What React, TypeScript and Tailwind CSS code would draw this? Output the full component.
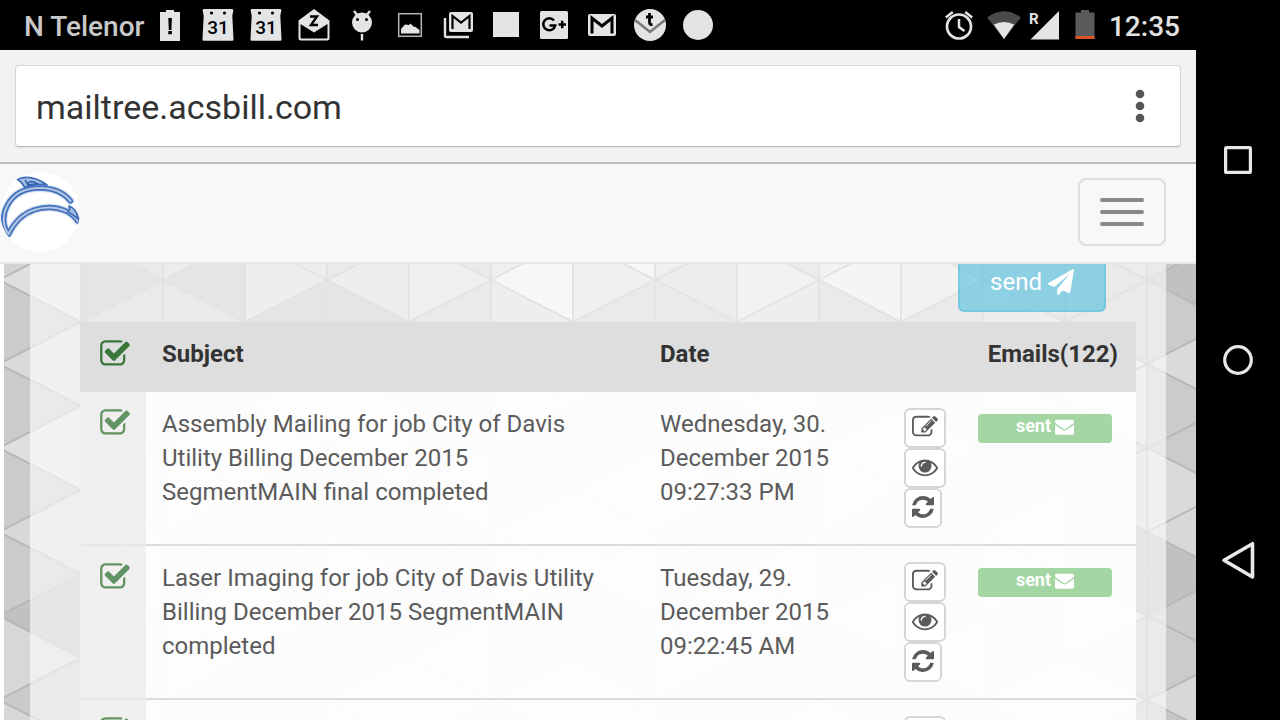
import React from "react";

type IconProps = { d: string; className: string; viewBox?: string };

function Glyph({ d, className, viewBox = "0 0 1792 1792" }: IconProps) {
  return (
    <svg viewBox={viewBox} className={className} fill="currentColor" aria-hidden="true">
      <path d={d} />
    </svg>
  );
}

const CHECK =
  "M1472 930v318q0 119-84.5 203.5t-203.5 84.5h-832q-119 0-203.5-84.5t-84.5-203.5v-832q0-119 84.5-203.5t203.5-84.5h832q63 0 117 25 15 7 18 23 3 17-9 29l-49 49q-10 10-23 10-3 0-9-2-23-6-45-6h-832q-66 0-113 47t-47 113v832q0 66 47 113t113 47h832q66 0 113-47t47-113v-254q0-13 9-22l64-64q10-10 23-10 6 0 12 3 20 8 20 29zm231-489l-814 814q-24 24-57 24t-57-24l-430-430q-24-24-24-57t24-57l110-110q24-24 57-24t57 24l263 263 647-647q24-24 57-24t57 24l110 110q24 24 24 57t-24 57z";
const EDIT =
  "M888 1184l116-116-152-152-116 116v56h96v96h56zm440-720q-16-16-33 1l-350 350q-17 17-1 33t33-1l350-350q17-17 1-33zm80 594v190q0 119-84.5 203.5t-203.5 84.5h-832q-119 0-203.5-84.5t-84.5-203.5v-832q0-119 84.5-203.5t203.5-84.5h832q63 0 117 25 15 7 18 23 3 17-9 29l-49 49q-14 14-32 8-23-6-45-6h-832q-66 0-113 47t-47 113v832q0 66 47 113t113 47h832q66 0 113-47t47-113v-126q0-13 9-22l64-64q15-15 35-7t20 29zm-96-738l288 288-672 672h-288v-288zm444 132l-92 92-288-288 92-92q28-28 68-28t68 28l152 152q28 28 28 68t-28 68z";
const EYE =
  "M1664 960q-152-236-381-353 61 104 61 225 0 185-131.5 316.5t-316.5 131.5-316.5-131.5-131.5-316.5q0-121 61-225-229 117-381 353 133 205 333.5 326.5t434.5 121.5 434.5-121.5 333.5-326.5zm-720-384q0-20-14-34t-34-14q-125 0-214.5 89.5t-89.5 214.5q0 20 14 34t34 14 34-14 14-34q0-86 61-147t147-61q20 0 34-14t14-34zm848 384q0 34-20 69-140 230-376.5 368.5t-499.5 138.5-499.5-139-376.5-368q-20-35-20-69t20-69q140-229 376.5-368t499.5-139 499.5 139 376.5 368q20 35 20 69z";
const REFRESH =
  "M1639 1056q0 5-1 7-64 268-268 434.5t-478 166.5q-146 0-282.5-55t-243.5-157l-129 129q-19 19-45 19t-45-19-19-45v-448q0-26 19-45t45-19h448q26 0 45 19t19 45-19 45l-137 137q71 66 161 102t187 36q134 0 250-65t186-179q11-17 53-117 8-23 30-23h192q13 0 22.5 9.5t9.5 22.5zm25-800v448q0 26-19 45t-45 19h-448q-26 0-45-19t-19-45 19-45l138-138q-148-137-349-137-134 0-250 65t-186 179q-11 17-53 117-8 23-30 23h-199q-13 0-22.5-9.5t-9.5-22.5v-7q65-268 270-434.5t480-166.5q146 0 284 55.5t245 156.5l130-129q19-19 45-19t45 19 19 45z";
const PLANE =
  "M1764 11q33 24 27 64l-256 1536q-5 29-32 45-14 8-31 8-11 0-24-5l-453-185-242 295q-18 23-49 23-13 0-22-4-19-7-30.5-23.5t-11.5-36.5v-349l864-1059-1069 925-395-162q-37-14-40-55-2-40 32-59l1664-960q15-9 32-9 20 0 36 11z";
const ENVELOPE =
  "M1792 710v794q0 66-47 113t-113 47h-1472q-66 0-113-47t-47-113v-794q44 49 101 87 362 246 497 345 57 42 92.5 65.5t94.5 48 110 24.5h2q51 0 110-24.5t94.5-48 92.5-65.5q170-123 498-345 57-39 100-87zm0-294q0 79-49 151t-122 123q-376 261-468 325-10 7-42.5 31t-54 38.5-52 32.5-57.5 27-50 9h-2q-23 0-50-9t-57.5-27-52-32.5-54-38.5-42.5-31q-91-64-262-182.5t-205-142.5q-62-42-117-115.5t-55-136.5q0-78 41.5-130t118.5-52h1472q65 0 112.5 47t47.5 113z";

// Notification icons share a 48 x 50 cell.
function Cell({ children }: { children: React.ReactNode }) {
  return (
    <svg viewBox="0 0 48 50" className="h-[50px] w-12 shrink-0" fill="#e4e4e4" aria-hidden="true">
      {children}
    </svg>
  );
}

function Calendar() {
  return (
    <Cell>
      <path d="M10 9h28c1 0 1.500 .8 1.300 1.800l-1 5 1.200 23.500c0 1-.5 1.500-1.500 1.500H10c-1 0-1.500-.5-1.500-1.500l1.200-23.500-1-5C8.500 9.800 9 9 10 9z" />
      <circle cx="17.500" cy="13" r="1.600" fill="#000" />
      <circle cx="30.500" cy="13" r="1.600" fill="#000" />
      <text
        x="24"
        y="34.300"
        textAnchor="middle"
        fontSize="19"
        fontWeight="500"
        fill="#000"
        className="font-['Liberation_Sans_Narrow','Roboto',sans-serif]"
      >
        31
      </text>
    </Cell>
  );
}

function StatusBar() {
  return (
    <header className="flex h-[50px] shrink-0 items-center bg-black pr-4">
      <span className="w-[146px] shrink-0 pl-6 pt-1 text-[28px] leading-8 font-medium whitespace-nowrap text-[#c9c9c9]">
        N Telenor
      </span>
      <Cell>
        <path d="M14 12h6v-2h8v2h6v29H14z" />
        <path d="M22.300 18h3.600l-.5 12h-2.600zM22.300 31h3.600v3.200h-3.600z" fill="#000" />
      </Cell>
      <Calendar />
      <Calendar />
      <Cell>
        <path d="M24 9 8.500 20.500V38q0 2.500 2.500 2.500h26q2.500 0 2.500-2.500V20.500z" />
        <path d="M10.500 24 24 32.500 37.500 24v13.500q0 1-1 1h-25q-1 0-1-1z" fill="#000" />
        <path d="M20 16.500h7L21 25h7" fill="none" stroke="#000" strokeWidth="2.400" />
      </Cell>
      <Cell>
        <circle cx="24" cy="22.500" r="10" />
        <path d="M16 11l4 5M32 11l-4 5M24 34v6.500" stroke="#e4e4e4" strokeWidth="2.400" />
        <circle cx="19.500" cy="19.500" r="1.500" fill="#000" />
        <circle cx="28.500" cy="19.500" r="1.500" fill="#000" />
      </Cell>
      <Cell>
        <rect x="12.700" y="13.700" width="22.600" height="22.600" fill="none" stroke="#b5b5b5" strokeWidth="1.500" />
        <path d="M15 33.500V29l4-4.500 4 .5 1.500-1.500 3 3 2 .5 4 3v3.500z" />
      </Cell>
      <Cell>
        <path d="M11 18v17.500q0 1.500 1.500 1.500H35" fill="none" stroke="#e4e4e4" strokeWidth="2.400" />
        <rect x="15" y="12" width="24" height="20" rx="2" />
        <path d="M18.500 29V16l8.500 6.500 8.500-6.500v13" fill="none" stroke="#000" strokeWidth="2.200" />
      </Cell>
      <Cell>
        <rect x="11" y="12" width="26" height="25" />
      </Cell>
      <Cell>
        <rect x="10" y="11" width="28" height="28" rx="1.500" />
        <path d="M24 20.500a6 6 0 1 0 1.200 5h-5.700M28.500 24.500h7.500M32.200 20.700v7.600" fill="none" stroke="#000" strokeWidth="2.500" />
      </Cell>
      <Cell>
        <rect x="10" y="14" width="28" height="22" rx="2" />
        <path d="M14 33.500V18l10 8 10-8v15.500" fill="none" stroke="#000" strokeWidth="3" />
      </Cell>
      <Cell>
        <circle cx="24" cy="25" r="16" />
        <path d="M9 20l15 12 15-12" fill="none" stroke="#777" strokeWidth="2.500" />
        <path d="M23.500 13v9.500q0 2.500 3 2M20 17h7" fill="none" stroke="#000" strokeWidth="2.800" />
      </Cell>
      <Cell>
        <circle cx="24" cy="25" r="15" />
      </Cell>
      <div className="ml-auto flex items-center">
        <svg viewBox="0 0 32 50" className="h-[50px] w-8" fill="none" stroke="#e4e4e4" aria-hidden="true">
          <circle cx="16" cy="26.500" r="12" strokeWidth="2.700" />
          <path d="M16 19v8l5.500 4M2.800 17.500l7-5.500M29.200 17.500l-7-5.500" strokeWidth="2.500" />
        </svg>
        <svg viewBox="0 0 36 50" className="ml-[11px] h-[50px] w-9" aria-hidden="true">
          <path d="M18 39 1 17.500Q18 5 35 17.500z" fill="#494949" />
          <path d="M18 39 7.800 24.500Q18 19.500 28.200 24.500z" fill="#e4e4e4" />
        </svg>
        <svg viewBox="0 0 32 50" className="ml-[7px] h-[50px] w-8" fill="#e4e4e4" aria-hidden="true">
          <path d="M30 11v28.500H1.500z" />
          <text x="0" y="23.500" fontSize="15" fontWeight="700">
            R
          </text>
        </svg>
        <svg viewBox="0 0 20 50" className="ml-[14px] h-[50px] w-5" fill="#5b5b5b" aria-hidden="true">
          <path d="M.5 12.500H6V10h8v2.500h5.500V39H.5z" />
          <path d="M.5 36h19v3H.5z" fill="#dd5226" />
        </svg>
        <time className="ml-[14px] pt-1 text-[28px] leading-8 font-medium text-[#e2e2e2]">12:35</time>
      </div>
    </header>
  );
}

function Dolphin() {
  const body = "M8.500 62C3 54 2 44 7 34C13 22 25 16 40 16C53 16 64 21 70.500 29";
  const belly = "M8.500 62C14 51 22 42 34 38C46 34 57 35 67 39.500Q74 43 77.500 49";
  return (
    <svg viewBox="0 0 80 80" className="size-20 rounded-full" fill="none" role="img" aria-label="Dolphin logo">
      <circle cx="40" cy="40" r="40" fill="#fff" />
      <g stroke="#d9e4f5" strokeWidth="8" strokeLinecap="round">
        <path d={body} />
        <path d={belly} />
      </g>
      <g stroke="#4272bb" strokeWidth="5.400" strokeLinecap="round">
        <path d={body} />
        <path d={belly} />
      </g>
      <g stroke="#b3c6e4" strokeWidth="2" strokeLinecap="round">
        <path d={body} />
        <path d={belly} />
      </g>
      <path d="M17 7Q32 2 47 13Q36 11 24.500 15Q22 10 17 7z" fill="#a9c0e3" stroke="#3f6fb8" strokeWidth="1.800" strokeLinejoin="round" />
      <path d="M25 8Q27 11 28 13M31 9.500Q27 11 28 13Q33 12 37 11.500Q34 9.500 31 9.500" stroke="#2b5fb0" strokeWidth="1.500" />
      <path d="M69 34Q76 36 78.500 47Q74 43 67.500 39.500Q71 38 69 34z" fill="#a9c0e3" stroke="#3f6fb8" strokeWidth="1.800" strokeLinejoin="round" />
    </svg>
  );
}

const SHADES = ["#cbcbcb", "#d9d9d9", "#d5d5d5", "#cbcbcb", "#d9d9d9", "#cfcfcf", "#dddddd"];

// Per strip, from the top triangle down; later triangles cycle through SHADES.
const STRIPS: string[][] = [
  ["#d3d3d3", "#dfdfdf", "#cbcbcb", "#dadada", "#cbcbcb", "#dfdfdf", "#cbcbcb", "#d8d8d8", "#cbcbcb", "#c1c1c1", "#d7d7d7", "#cacaca", "#d7d7d7"],
  ["#cbcbcb", "#bebebe", "#cbcbcb"],
  ["#cfcfcf", "#bebebe", "#cbcbcb"],
  ["#d3d3d3", "#d5d5d5", "#bebebe"],
  ["#cbcbcb", "#d5d5d5", "#bebebe"],
  ["#cbcbcb", "#d7d7d7", "#cbcbcb"],
  ["#d7d7d7", "#ebebeb", "#d5d5d5"],
  ["#ebebeb", "#d9d9d9", "#cbcbcb"],
  ["#d9d9d9", "#cfcfcf", "#cbcbcb"],
  ["#cfcfcf", "#dfdfdf", "#d5d5d5"],
  ["#dfdfdf", "#e6e6e6", "#cbcbcb"],
  ["#cfcfcf", "#dfdfdf", "#cbcbcb"],
  ["#cbcbcb", "#cbcbcb", "#d5d5d5"],
  ["#cfcfcf", "#cbcbcb", "#cbcbcb", "#dfdfdf", "#dadada", "#cbcbcb", "#d5d5d5", "#c1c1c1", "#c1c1c1", "#dfdfdf", "#cbcbcb", "#dadada"],
  ["#cbcbcb", "#c1c1c1", "#cbcbcb", "#dadada", "#cbcbcb", "#cbcbcb", "#dadada", "#d8d8d8", "#c1c1c1", "#cacaca", "#cbcbcb", "#d8d8d8", "#c6c6c6"],
];

function TriangleBackdrop() {
  const shapes: React.ReactNode[] = [];
  for (let i = 0; i < 15; i++) {
    const left = -5 + 82 * i;
    const right = left + 82;
    for (let k = -1; k < 12; k++) {
      const y = 16 + 42 * k;
      const pointsLeft = (i + k + 2) % 2 === 0;
      const fill = STRIPS[i][k + 1] ?? SHADES[(i * 5 + k * 3 + ((i * k) % 4)) % SHADES.length];
      const apex = pointsLeft ? left : right;
      const base = pointsLeft ? right : left;
      shapes.push(
        <path key={`${i}-${k}`} d={`M${apex} ${y}L${base} ${y - 42}V${y + 42}z`} fill={fill} stroke="#b8b8b8" strokeWidth="1.8" />,
      );
    }
  }
  return (
    <svg className="absolute top-0 left-1 h-full w-full" aria-hidden="true">
      {shapes}
    </svg>
  );
}

function Tick({ label, className }: { label: string; className: string }) {
  return (
    <label className="block cursor-pointer">
      <input type="checkbox" defaultChecked className="sr-only" aria-label={label} />
      <Glyph d={CHECK} className={className} />
    </label>
  );
}

function ActionButton({ label, d, narrow }: { label: string; d: string; narrow?: boolean }) {
  return (
    <button
      type="button"
      aria-label={label}
      className="flex h-10 items-start rounded-md border-2 border-[#d6d6d6] bg-white px-1.5 py-1 text-[#5b5b5b]"
    >
      <Glyph
        d={d}
        viewBox={narrow ? "128 0 1536 1792" : "0 0 1792 1792"}
        className={narrow ? "h-[26px] w-[22px]" : "size-[26px]"}
      />
    </button>
  );
}

const ROWS = [
  {
    subject: "Assembly Mailing for job City of Davis Utility Billing December 2015 SegmentMAIN final completed",
    date: "Wednesday, 30. December 2015 09:27:33 PM",
    sent: true,
  },
  {
    subject: "Laser Imaging for job City of Davis Utility Billing December 2015 SegmentMAIN completed",
    date: "Tuesday, 29. December 2015 09:22:45 AM",
    sent: true,
  },
  { subject: "", date: "", sent: false },
];

function MailTable() {
  return (
    <table className="w-full table-fixed border-separate border-spacing-0 text-left text-2xl leading-[34px]">
      <colgroup>
        <col className="w-[66px]" />
        <col />
        <col className="w-[244px]" />
        <col className="w-[74px]" />
        <col className="w-[174px]" />
      </colgroup>
      <thead>
        <tr className="h-[70px] bg-[#dedede] align-top text-[#333]">
          <th className="pt-4 pl-[19px]">
            <Tick label="Select all" className="size-8 text-[#3b763b]" />
          </th>
          <th className="px-4 pt-[15px] font-bold">Subject</th>
          <th className="px-4 pt-[15px] font-bold">Date</th>
          <th colSpan={2} className="pt-[15px] pr-[18px] text-right font-bold">
            Emails(122)
          </th>
        </tr>
      </thead>
      <tbody>
        {ROWS.map((row, i) => (
          <tr key={i} className="h-[154px] align-top text-[#5b5b5b]">
            <td className="border-b-2 border-[#e7e7e7] bg-[#f0f0f0]/85 pt-[15px] pl-[19px]">
              <Tick label={`Select mail ${i + 1}`} className="size-8 text-[#629362]" />
            </td>
            <td className="border-b-2 border-[#dcdcdc] bg-white/85 px-4 pt-[15px]">{row.subject}</td>
            <td className="border-b-2 border-[#dcdcdc] bg-white/85 px-4 pt-[15px]">{row.date}</td>
            <td className="border-b-2 border-[#dcdcdc] bg-white/85 px-4 py-4">
              <ActionButton label="Edit" d={EDIT} />
              <ActionButton label="View" d={EYE} />
              <ActionButton label="Resend" d={REFRESH} narrow />
            </td>
            <td className="border-b-2 border-[#dcdcdc] bg-white/85 pt-[22px] pr-6 pl-4">
              {row.sent && (
                <span className="flex items-center justify-center gap-1 rounded bg-[#a4d6a4] pb-[5px] text-lg leading-6 font-bold text-white">
                  sent
                  <Glyph d={ENVELOPE} className="size-[19px]" />
                </span>
              )}
            </td>
          </tr>
        ))}
      </tbody>
    </table>
  );
}

function SystemNav() {
  return (
    <nav className="flex w-[84px] shrink-0 flex-col bg-black py-[60px]" aria-label="System navigation">
      <button type="button" aria-label="Recent apps" className="flex flex-1 items-center justify-center">
        <svg viewBox="0 0 40 40" className="size-10" fill="none" stroke="#e8e8e8" strokeWidth="3.200">
          <rect x="7.600" y="7.600" width="24.800" height="24.800" rx="1" />
        </svg>
      </button>
      <button type="button" aria-label="Home" className="flex flex-1 items-center justify-center">
        <svg viewBox="0 0 40 40" className="size-10" fill="none" stroke="#e8e8e8" strokeWidth="3.200">
          <circle cx="20" cy="20" r="13.300" />
        </svg>
      </button>
      <button type="button" aria-label="Back" className="flex flex-1 items-center justify-center">
        <svg viewBox="0 0 40 40" className="size-10" fill="none" stroke="#e8e8e8" strokeWidth="3.600" strokeLinejoin="round">
          <path d="M6 20.300 34.500 3.700V37z" />
        </svg>
      </button>
    </nav>
  );
}

export default function App() {
  return (
    <div className="flex h-screen overflow-hidden bg-black font-[Roboto,sans-serif]">
      <div className="flex min-w-0 flex-1 flex-col bg-white">
        <StatusBar />
        <div className="shrink-0 border-b-2 border-[#bcbcbc] bg-[#f2f2f2] px-[15px] pt-[15px] pb-[15px]">
          <div className="flex h-[82px] items-center rounded-sm border border-[#d5d5d5] border-b-[#b5b5b5] bg-white pr-5 pl-5 shadow-xs">
            <input
              type="text"
              aria-label="Address"
              defaultValue="mailtree.acsbill.com"
              className="min-w-0 flex-1 bg-transparent pt-0.5 text-[34px] text-[#333] outline-none"
            />
            <button type="button" aria-label="Browser menu" className="flex w-10 justify-center">
              <svg viewBox="0 0 10 36" className="h-9 w-[10px]" fill="#555">
                <circle cx="5" cy="6" r="4.300" />
                <circle cx="5" cy="18" r="4.300" />
                <circle cx="5" cy="30" r="4.300" />
              </svg>
            </button>
          </div>
        </div>
        <div className="flex h-[100px] shrink-0 items-center justify-between border-b-2 border-[#e7e7e7] bg-[#f8f8f8] pr-[30px] pb-0.5">
          <a href="#home" aria-label="Home page">
            <Dolphin />
          </a>
          <button
            type="button"
            aria-label="Toggle navigation"
            className="flex h-[68px] w-[88px] flex-col items-center justify-center gap-2 rounded-lg border-2 border-[#ddd]"
          >
            <span className="h-1 w-11 rounded-full bg-[#888]" />
            <span className="h-1 w-11 rounded-full bg-[#888]" />
            <span className="h-1 w-11 rounded-full bg-[#888]" />
          </button>
        </div>
        <main className="relative min-h-0 flex-1 overflow-hidden">
          <TriangleBackdrop />
          <div className="relative mx-[30px] -mt-3 bg-white/60 pr-[30px] pl-[50px]">
            <div className="flex justify-end pr-[30px] pb-[10px]">
              <button
                type="button"
                className="flex h-[60px] items-center gap-1.5 rounded-md border-2 border-[#46b8da]/30 bg-[#5bc0de]/65 px-[30px] text-2xl text-white"
              >
                send
                <Glyph d={PLANE} className="size-[26px]" />
              </button>
            </div>
            <MailTable />
          </div>
        </main>
      </div>
      <SystemNav />
    </div>
  );
}
